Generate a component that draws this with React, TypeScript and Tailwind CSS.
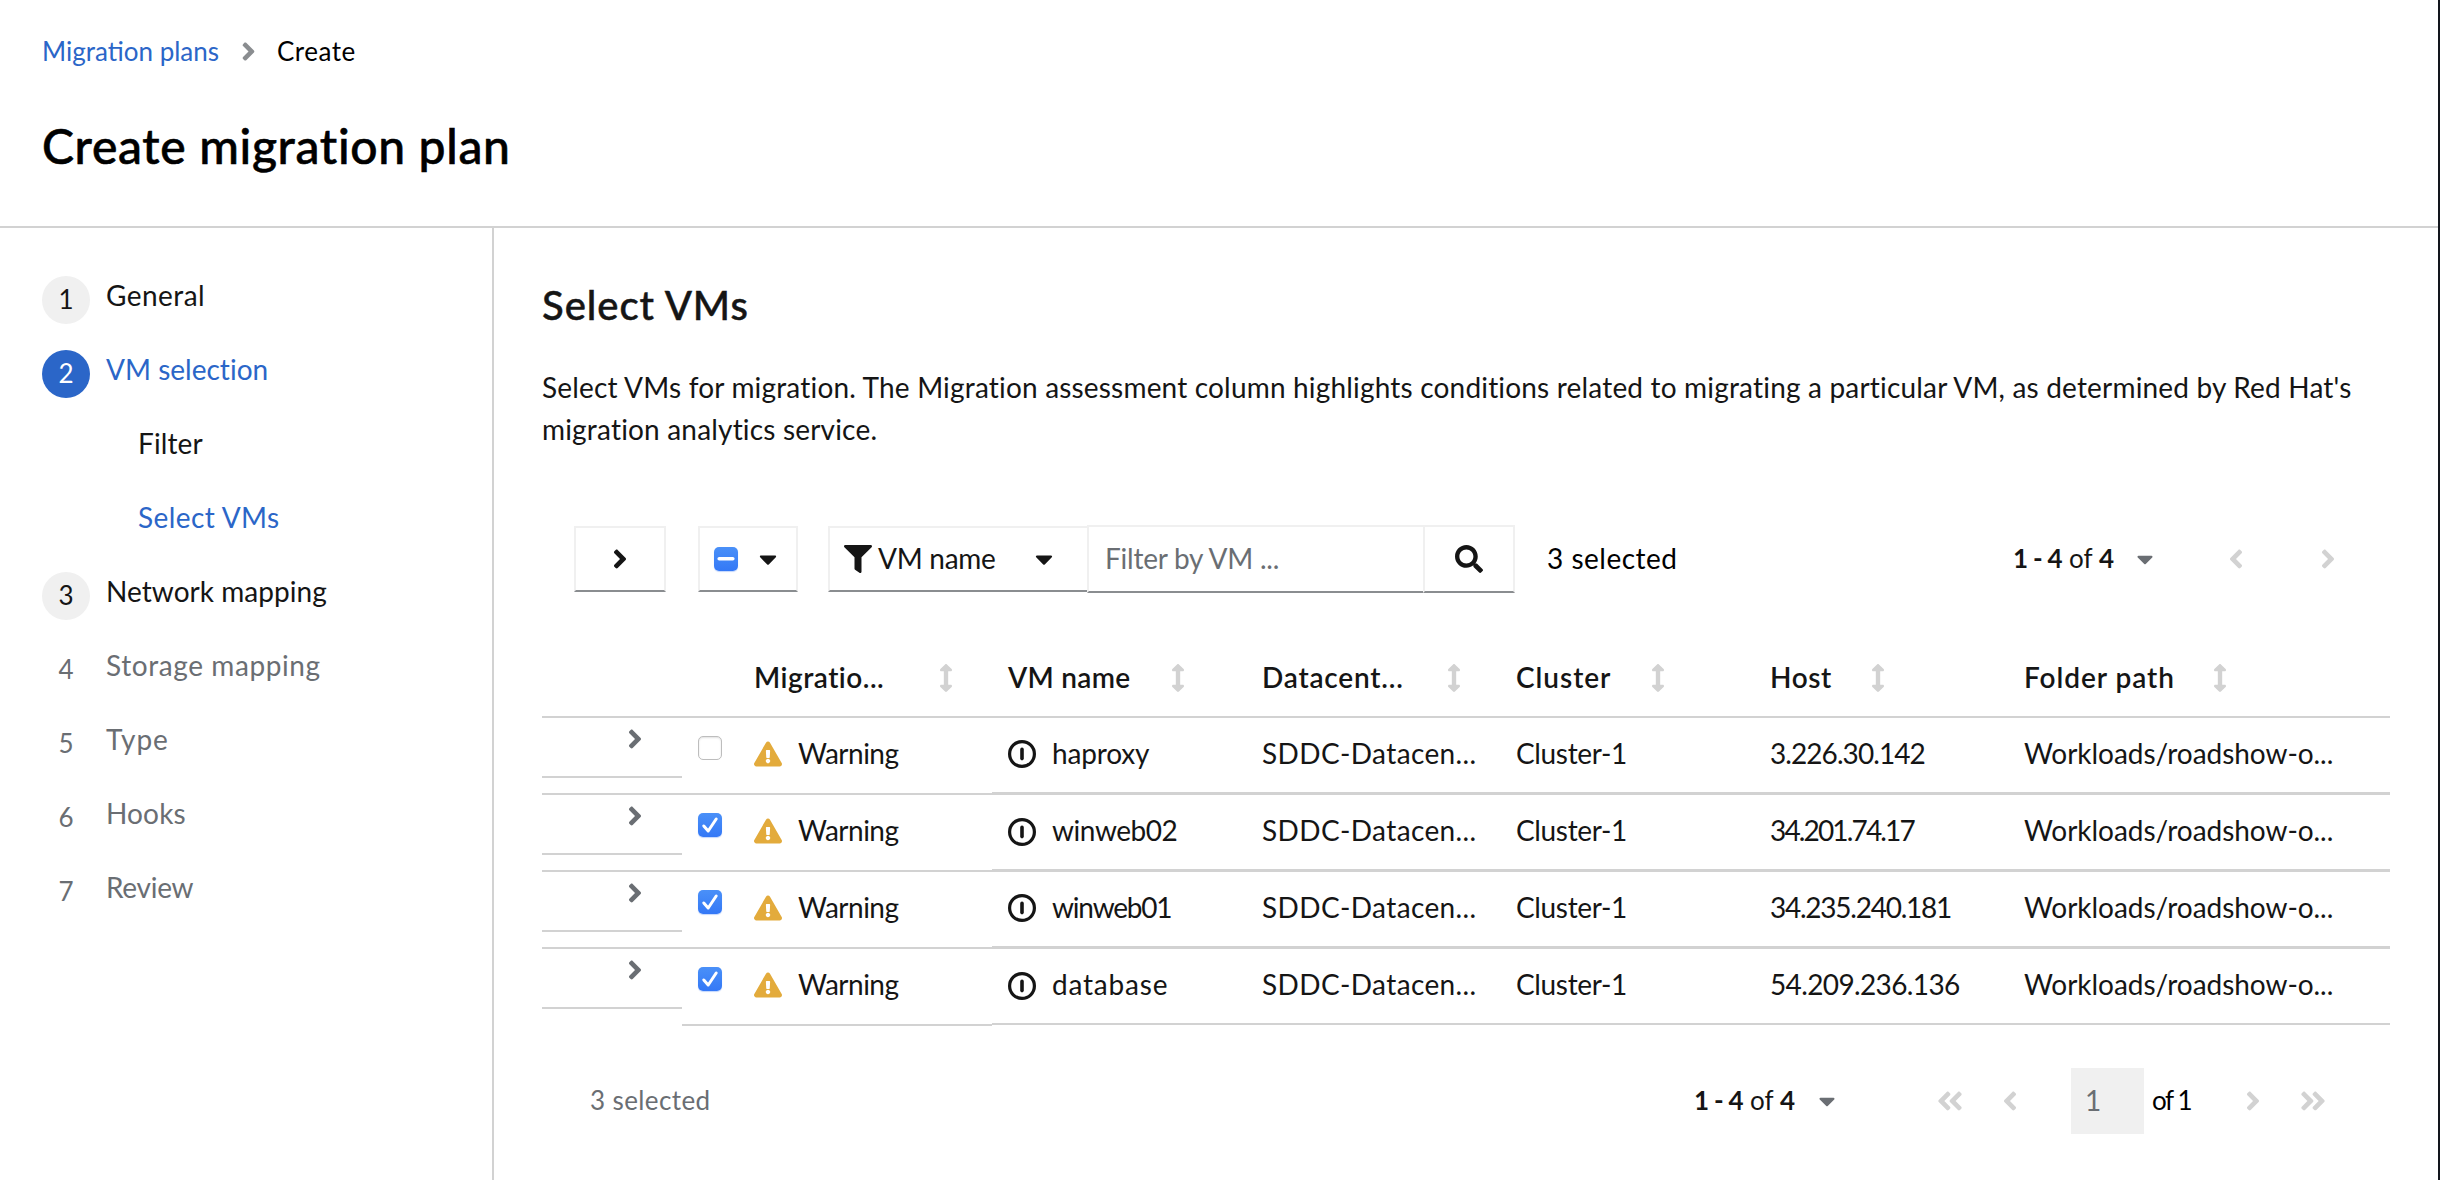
import React from "react";
import {
  FaAngleDoubleLeft,
  FaAngleDoubleRight,
  FaAngleLeft,
  FaAngleRight,
  FaArrowsAltV,
  FaCaretDown,
  FaExclamationTriangle,
  FaFilter,
  FaSearch,
} from "react-icons/fa";

type Step = { n?: string; label: string; state: "done" | "current" | "disabled" | "sub" | "subCurrent"; tracking: string };

const steps: Step[] = [
  { n: "1", label: "General", state: "done", tracking: "tracking-[0.44px]" },
  { n: "2", label: "VM selection", state: "current", tracking: "tracking-[0.01px]" },
  { label: "Filter", state: "sub", tracking: "tracking-[0.13px]" },
  { label: "Select VMs", state: "subCurrent", tracking: "tracking-[0.4px]" },
  { n: "3", label: "Network mapping", state: "done", tracking: "tracking-[0.04px]" },
  { n: "4", label: "Storage mapping", state: "disabled", tracking: "tracking-[0.59px]" },
  { n: "5", label: "Type", state: "disabled", tracking: "tracking-[0.92px]" },
  { n: "6", label: "Hooks", state: "disabled", tracking: "tracking-[0.15px]" },
  { n: "7", label: "Review", state: "disabled", tracking: "tracking-[-0.28px]" },
];

const circleStyle = {
  done: "bg-[#f0f0f0] text-[#151515]",
  current: "bg-[#2b66c8] text-white",
  disabled: "text-[#6a6e73]",
  sub: "",
  subCurrent: "",
};

const labelStyle = {
  done: "text-[#151515]",
  current: "text-[#2b66c8]",
  disabled: "text-[#6a6e73]",
  sub: "text-[#151515]",
  subCurrent: "text-[#2b66c8]",
};

const columns = [
  { label: "Migratio...", tracking: "tracking-[0.5px]", gap: "ml-[55px]" },
  { label: "VM name", tracking: "tracking-[0.3px]", gap: "ml-[41px]" },
  { label: "Datacent...", tracking: "tracking-[0.8px]", gap: "ml-[43px]" },
  { label: "Cluster", tracking: "tracking-[0.95px]", gap: "ml-10" },
  { label: "Host", tracking: "tracking-[0.58px]", gap: "ml-[39px]" },
  { label: "Folder path", tracking: "tracking-[0.95px]", gap: "ml-[38px]" },
];

const rows = [
  { name: "haproxy", nameTracking: "tracking-[-0.17px]", host: "3.226.30.142", hostTracking: "tracking-[-0.93px]", checked: false },
  { name: "winweb02", nameTracking: "tracking-[-0.45px]", host: "34.201.74.17", hostTracking: "tracking-[-1.84px]", checked: true },
  { name: "winweb01", nameTracking: "tracking-[-1.2px]", host: "34.235.240.181", hostTracking: "tracking-[-1.25px]", checked: true },
  { name: "database", nameTracking: "tracking-[0.8px]", host: "54.209.236.136", hostTracking: "tracking-[-0.63px]", checked: true },
];

function Checkbox({ state }: { state: "off" | "on" | "mixed" }) {
  if (state === "off") {
    return <span className="block size-6 shrink-0 rounded-[5px] border border-[#bdbdbd] bg-white shadow-[inset_0_1px_2px_rgba(0,0,0,0.12)]" />;
  }
  return (
    <span className="flex size-6 shrink-0 items-center justify-center rounded-[5px] bg-gradient-to-b from-[#4a90f8] to-[#3478f6] shadow-[0_1px_1px_rgba(52,120,246,0.3)]">
      <svg viewBox="0 0 24 24" className="size-6" fill="none" stroke="white" strokeWidth="3" strokeLinecap="round" strokeLinejoin="round">
        {state === "on" ? <path d="M5.8 13l4.4 5L18.2 6" /> : <path strokeWidth="3.6" d="M5.2 11.7h13.6" />}
      </svg>
    </span>
  );
}

function PowerOff() {
  return (
    <svg viewBox="0 0 28 28" className="size-7 shrink-0 text-[#151515]" fill="none" stroke="currentColor">
      <circle cx="14" cy="14" r="12.4" strokeWidth="3.2" />
      <path d="M14 9.4v9.2" strokeWidth="3.6" strokeLinecap="round" />
    </svg>
  );
}

function Range() {
  return (
    <span className="flex text-[26px] leading-[42px] whitespace-pre text-[#151515]">
      <b className="w-14 font-bold tracking-[-0.7px]">1 - 4</b>
      <span className="w-[30px]">of</span>
      <b className="w-4 font-bold">4</b>
    </span>
  );
}

export default function App() {
  return (
    <div className="flex h-[1180px] w-[2440px] flex-col overflow-hidden border-r-2 border-[#12151c] bg-white font-['Lato',sans-serif] text-[28px] leading-[42px] text-[#151515]">
      <header className="flex h-[228px] shrink-0 flex-col border-b-2 border-[#d2d2d2] pl-[42px] text-black">
        <nav className="mt-[30px] flex h-[42px] items-center text-[26px]">
          <a className="w-[199px] text-[#2b66c8]">Migration plans</a>
          <FaAngleRight className="-ml-[7px] size-[29px] text-[#8a8d90]" />
          <span className="ml-[14px] tracking-[0.5px]">Create</span>
        </nav>
        <h1 className="mt-[43px] text-[48px] leading-[62px] font-medium tracking-[0.68px] [-webkit-text-stroke:0.6px_black]">
          Create migration plan
        </h1>
      </header>

      <div className="flex min-h-0 flex-1">
        <aside className="flex w-[494px] shrink-0 flex-col gap-[26px] border-r-2 border-[#d2d2d2] pt-12 pl-[42px]">
          {steps.map((s) => (
            <div key={s.label} className="flex h-12 shrink-0">
              {s.n ? (
                <span className={`mr-4 flex size-12 items-center justify-center rounded-full pb-[2px] text-[26px] ${circleStyle[s.state]}`}>{s.n}</span>
              ) : (
                <span className="w-24" />
              )}
              <span className={`leading-[38px] whitespace-nowrap ${labelStyle[s.state]} ${s.tracking}`}>{s.label}</span>
            </div>
          ))}
        </aside>

        <main className="flex min-w-0 flex-1 flex-col pt-[51px] pr-12 pl-12">
          <h2 className="text-[40px] leading-[52px] font-medium tracking-[0.97px] [-webkit-text-stroke:0.5px_#151515]">Select VMs</h2>
          <p className="mt-[35px] tracking-[0.18px] whitespace-nowrap">
            Select VMs for migration. The Migration assessment column highlights conditions related to migrating a particular VM, as determined by Red Hat's
            <br />
            migration analytics service.
          </p>

          <div className="mt-[75px] flex h-[68px] shrink-0 items-center pl-8">
            <button className="flex h-[66px] w-[92px] items-center justify-center border-2 border-[#f0f0f0] border-b-[#8a8d90]">
              <FaAngleRight className="size-[30px]" />
            </button>
            <button className="ml-8 flex h-[66px] w-[100px] items-center border-2 border-[#f0f0f0] border-b-[#8a8d90] pl-[14px]">
              <Checkbox state="mixed" />
              <FaCaretDown className="ml-4 size-[28px]" />
            </button>
            <button className="ml-[30px] flex h-[66px] w-[259px] items-center border-2 border-r-0 border-[#f0f0f0] border-b-[#8a8d90] pl-[14px]">
              <FaFilter className="size-7" />
              <span className="ml-[6px] w-[152px] pb-[3px] text-left tracking-[-0.28px]">VM name</span>
              <FaCaretDown className="size-[28px]" />
            </button>
            <div className="flex h-[68px] w-[336px] items-center border-2 border-r-0 border-[#f0f0f0] border-b-[#8a8d90] pb-[3px] pl-4 tracking-[-0.23px] text-[#6a6e73]">
              Filter by VM ...
            </div>
            <button className="flex h-[68px] w-[92px] items-center justify-center border-2 border-[#f0f0f0] border-b-[#8a8d90]">
              <FaSearch className="size-7" />
            </button>
            <span className="ml-8 pb-[3px] tracking-[0.5px] text-black">3 selected</span>
            <div className="ml-auto flex items-center pr-[47px]">
              <span className="pb-[3px]">
                <Range />
              </span>
              <FaCaretDown className="ml-[17px] size-[26px] text-[#6a6e73]" />
              <FaAngleLeft className="ml-[63px] size-[30px] text-[#d2d2d2]" />
              <FaAngleRight className="ml-[62px] size-[30px] text-[#d2d2d2]" />
            </div>
          </div>

          <div className="mt-[47px] grid h-[78px] shrink-0 grid-cols-[196px_repeat(5,254px)_1fr] items-center border-b-2 border-[#d2d2d2] font-semibold">
            <span />
            {columns.map((c) => (
              <span key={c.label} className={`flex items-center pl-4 whitespace-nowrap ${c.tracking}`}>
                <span className="pb-[2px]">{c.label}</span>
                <FaArrowsAltV className={`h-7 w-[14px] text-[#d2d2d2] ${c.gap}`} />
              </span>
            ))}
          </div>

          {rows.map((r, i) => {
            const last = i === rows.length - 1;
            return (
              <div key={r.name} className={`flex h-[77px] shrink-0 border-[#d2d2d2] ${last ? "" : "border-b-2"}`}>
                <div className="flex h-[60px] w-[140px] shrink-0 border-b-2 border-[#d2d2d2] pt-[6px] pl-[78px]">
                  <FaAngleRight className="size-[30px] text-[#6a6e73]" />
                </div>
                <div className={`flex w-[310px] shrink-0 border-[#d2d2d2] pl-4 ${last ? "border-b-2" : ""}`}>
                  <div className="w-14 pt-[18px]">
                    <Checkbox state={r.checked ? "on" : "off"} />
                  </div>
                  <FaExclamationTriangle className="mt-[22px] h-7 w-7 text-[#e3ab3c]" />
                  <span className="ml-4 pt-[14px] tracking-[-0.5px]">Warning</span>
                </div>
                <div
                  className={`grid flex-1 grid-cols-[repeat(4,254px)_1fr] border-[#d2d2d2] pt-[14px] pl-4 whitespace-nowrap ${last ? "mb-px border-b-2" : "border-b"}`}
                >
                  <span className="flex">
                    <span className={`mr-4 ${i % 2 ? "mt-[9px]" : "mt-2"}`}>
                      <PowerOff />
                    </span>
                    <span className={r.nameTracking}>{r.name}</span>
                  </span>
                  <span className="tracking-[0.38px]">SDDC-Datacen...</span>
                  <span className="tracking-[-0.35px]">Cluster-1</span>
                  <span className={r.hostTracking}>{r.host}</span>
                  <span className="tracking-[-0.05px]">Workloads/roadshow-o...</span>
                </div>
              </div>
            );
          })}

          <footer className="mt-[42px] flex h-[66px] shrink-0 items-center pr-[62px] pl-12 text-[26px]">
            <span className="pb-[2px] tracking-[0.4px] text-[#6a6e73]">3 selected</span>
            <div className="ml-auto flex items-center">
              <span className="pb-[2px]">
                <Range />
              </span>
              <FaCaretDown className="ml-[18px] size-[26px] text-[#6a6e73]" />
              <FaAngleDoubleLeft className="ml-[95px] size-[30px] text-[#d2d2d2]" />
              <FaAngleLeft className="ml-[30px] size-[30px] text-[#d2d2d2]" />
              <span className="ml-[46px] flex h-[66px] w-[73px] items-center bg-[#f0f0f0] pb-[2px] pl-[14px] text-[28px] text-[#6a6e73]">1</span>
              <span className="ml-2 w-10 pb-[2px] tracking-[-1.4px] whitespace-nowrap text-black">of 1</span>
              <FaAngleRight className="ml-[46px] size-[30px] text-[#d2d2d2]" />
              <FaAngleDoubleRight className="ml-[30px] size-[30px] text-[#d2d2d2]" />
            </div>
          </footer>
        </main>
      </div>
    </div>
  );
}
